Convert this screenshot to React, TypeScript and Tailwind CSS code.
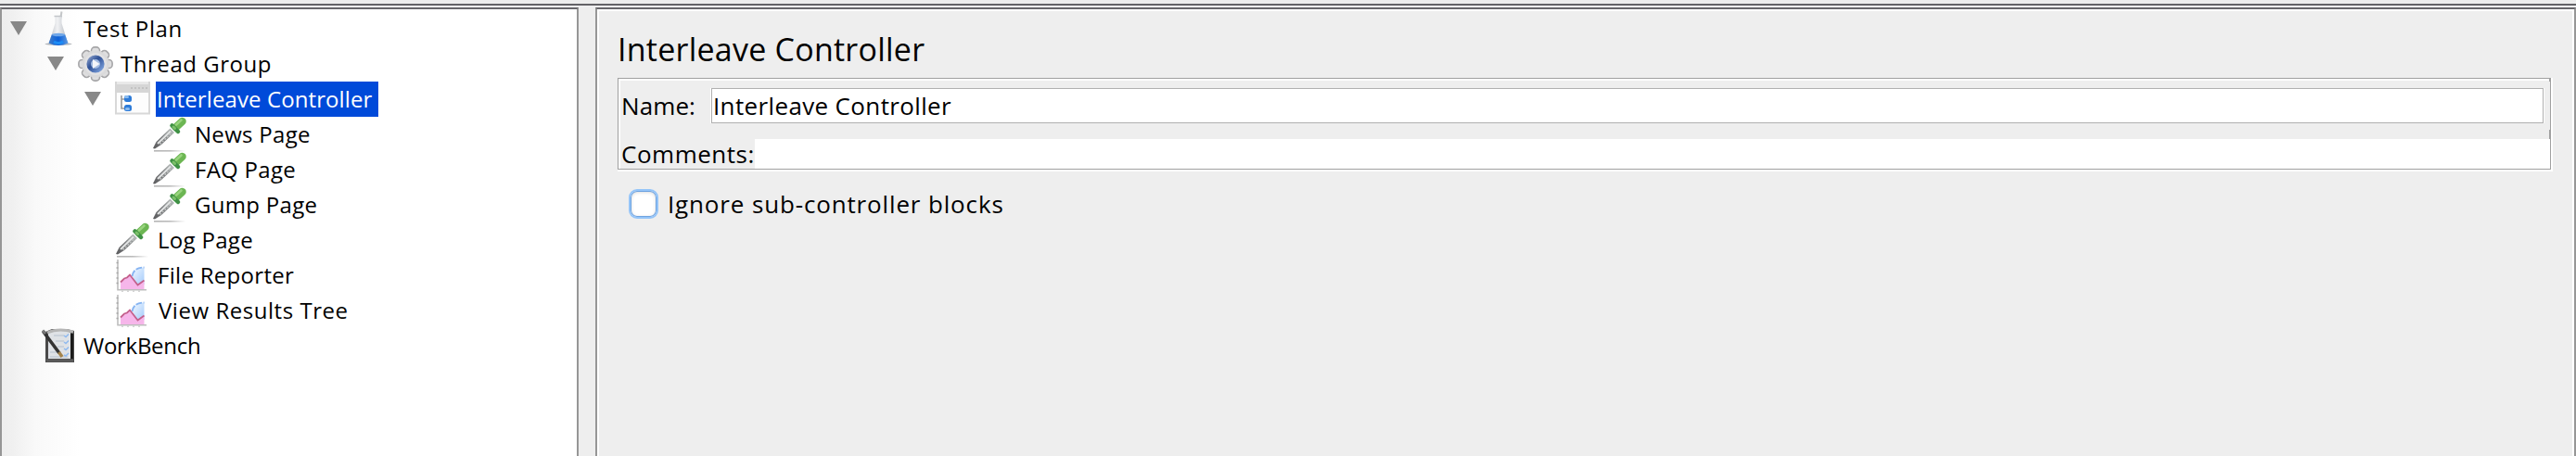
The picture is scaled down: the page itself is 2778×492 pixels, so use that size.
import React from "react";

function FlaskIcon() {
  return (
    <svg className="block h-[38px] w-[38px]" viewBox="0 0 38 38">
      <defs>
        <linearGradient id="flaskGlass" x1="0" x2="1">
          <stop offset="0" stopColor="#bfc3c9" />
          <stop offset="0.45" stopColor="#f1f2f4" />
          <stop offset="1" stopColor="#b3b8bf" />
        </linearGradient>
        <linearGradient id="flaskLiquid" x1="0" x2="1">
          <stop offset="0" stopColor="#3f7ccb" />
          <stop offset="0.5" stopColor="#0a5fd8" />
          <stop offset="1" stopColor="#5f9ae0" />
        </linearGradient>
      </defs>
      <ellipse cx="19" cy="35.5" rx="14.5" ry="1.4" fill="#9a9fa6" opacity="0.75" />
      <path d="M22.5 0.5 L20 15" stroke="#c4c6c8" strokeWidth="2" />
      <path d="M15.500 5 H22.500 V13 L29 34 Q19 39 9 34 L15.500 13 Z" fill="url(#flaskGlass)" />
      <path d="M14.500 5.500 H23" stroke="#c2c5c9" strokeWidth="1.500" />
      <path d="M12 25 H26 L29.500 34.500 Q19 39.500 8.500 34.500 Z" fill="url(#flaskLiquid)" />
      <ellipse cx="19" cy="25.500" rx="7" ry="1.800" fill="#6fa6e8" />
      <path d="M14 33 Q19 36 24 33" stroke="#1c8cf5" strokeWidth="3" fill="none" />
    </svg>
  );
}

function GearIcon() {
  return (
    <svg className="block h-[38px] w-[38px]" viewBox="0 0 38 38">
      <defs>
        <linearGradient id="gearBlue" x1="0" y1="0" x2="1" y2="1">
          <stop offset="0" stopColor="#8299c6" />
          <stop offset="0.4" stopColor="#2f5196" />
          <stop offset="1" stopColor="#7ba0dc" />
        </linearGradient>
      </defs>
      <g fill="#dededf" stroke="#a6a6a8" strokeWidth="1.6">
        {[0, 45, 90, 135].map((a) => (
          <rect key={a} x="14.5" y="0.9" width="9" height="36.2" rx="3.6" transform={`rotate(${a} 19 19)`} />
        ))}
      </g>
      <circle cx="19" cy="19" r="14.5" fill="#dadadb" />
      <circle cx="19" cy="19" r="12" fill="#e2e2e4" />
      <circle cx="19" cy="19" r="7.3" fill="#a4bce2" stroke="url(#gearBlue)" strokeWidth="4.6" />
      <path d="M16 14 L23.500 19 L16 24 Z" fill="#f4f6fa" />
    </svg>
  );
}

function ControllerIcon() {
  return (
    <svg className="block h-[38px] w-[38px]" viewBox="0 0 38 38">
      <rect x="1" y="1" width="36" height="33.5" fill="#fdfdfd" stroke="#d8d8d8" strokeWidth="2" />
      <rect x="0" y="0" width="38" height="12" fill="#d6d6d6" />
      <rect x="2" y="0" width="34" height="3" fill="#e9e9e9" />
      <path d="M17 7 h2 M21 7 h2 M25 7 h2 M29 7 h2 M33 7 h2" stroke="#c2c2c2" strokeWidth="2" />
      <path d="M7 15 V29 H11 M7 19 H11" stroke="#9a9a9a" strokeWidth="1.6" fill="none" />
      <rect x="10" y="15" width="8" height="7" rx="2.5" fill="#2d7bd8" />
      <rect x="10" y="25" width="8" height="7" rx="2.5" fill="#2d7bd8" />
      <rect x="10" y="15" width="5" height="3" rx="1.5" fill="#8bbcf0" />
      <rect x="11" y="28" width="5" height="3" rx="1.5" fill="#8bbcf0" />
    </svg>
  );
}

function DropperIcon() {
  return (
    <svg className="block h-[38px] w-[38px]" viewBox="0 0 38 38">
      <defs>
        <linearGradient id="dropperShade">
          <stop offset="0" stopColor="#b4b4b4" />
          <stop offset="0.5" stopColor="#bcbcbc" />
          <stop offset="1" stopColor="#fff" />
        </linearGradient>
        <linearGradient id="dropperTube" x1="0" y1="1" x2="1" y2="0">
          <stop offset="0" stopColor="#5a5a5c" />
          <stop offset="0.5" stopColor="#7c7e80" />
          <stop offset="1" stopColor="#c4cac8" />
        </linearGradient>
      </defs>
      <rect x="2" y="36" width="34" height="1.6" fill="url(#dropperShade)" />
      <path d="M1 34 L4.500 27 L19.500 12.500 L24 17 L10 30 L3 34.500 Z" fill="url(#dropperTube)" />
      <path d="M6 29 L20 15.500" stroke="#e2e4e4" strokeWidth="2" />
      <path d="M8.500 29.500 L21.500 17" stroke="#c2c5c4" strokeWidth="1.500" strokeDasharray="2 1.500" />
      <path d="M26 11 L32.500 5" stroke="#6cb653" strokeWidth="8.500" strokeLinecap="round" />
      <path d="M21.500 9.500 L28 16" stroke="#3f9145" strokeWidth="4.500" strokeLinecap="round" />
      <path d="M23 11 L24.500 12.500" stroke="#7cc069" strokeWidth="3" strokeLinecap="round" />
      <path d="M26 8.500 L31.500 3.500" stroke="#98d47e" strokeWidth="2.600" strokeLinecap="round" />
    </svg>
  );
}

function ReportIcon() {
  return (
    <svg className="block h-[38px] w-[38px]" viewBox="0 0 38 38">
      <defs>
        <linearGradient id="reportBlue" x1="0" y1="0" x2="1" y2="1">
          <stop offset="0" stopColor="#f2f8ff" />
          <stop offset="1" stopColor="#a3cbfb" />
        </linearGradient>
      </defs>
      <path d="M19 20 Q20 10.5 31.5 10.5 V29 H22 Z" fill="url(#reportBlue)" />
      <path d="M18.5 20 Q20 10.5 31.5 10.5" stroke="#86b4f2" strokeWidth="1.8" fill="none" strokeDasharray="7 1.5" />
      <path d="M6 26.5 L16 19 L24 29.5 L31.5 25 V34 H6 Z" fill="#f6b6ea" />
      <path d="M6 26.5 L10 22.5 L13 21.5 L16 18.5 L24.5 29.5 L31.5 24.5" stroke="#c4608c" strokeWidth="1.8" fill="none" />
      <path d="M3 2 V34.7 H34" stroke="#bdbdbd" strokeWidth="1.6" fill="none" />
      <path d="M1.5 5.5 h2 M1.5 11 h2 M1.5 16.500 h2 M1.500 22 h2 M1.500 27.500 h2" stroke="#a8a8a8" strokeWidth="1.5" />
      <path d="M8 35.500 v1.500 M14 35.500 v1.500 M20 35.500 v1.500 M26 35.500 v1.500" stroke="#c8c8c8" strokeWidth="1.5" />
    </svg>
  );
}

function WorkBenchIcon() {
  return (
    <svg className="block h-[38px] w-[38px]" viewBox="0 0 38 38">
      <path d="M5 4 L12 1 H28 L36 3 V37 H5 Z" fill="#4a4a4a" />
      <path d="M8 4 L13 2 H27 L32 5 V33 H8 Z" fill="#dfe2e6" />
      <path d="M7 5 Q19 -0.500 35 4" stroke="#b5b5b5" strokeWidth="3" fill="none" />
      <path d="M33.500 6 V35" stroke="#1c1c1c" strokeWidth="3" />
      <path d="M6 35 H35" stroke="#5a5a5a" strokeWidth="3.500" />
      <path d="M14 8 H25 M16 14 H25 M18 20 H25 M10 26 H17 M10 31 H29" stroke="#c3cbd6" strokeWidth="1.500" />
      <path d="M25 8 l2 1.500 l3 -3 M25 15 l2 1.500 l3 -3 M25 22 l2 1.500 l3 -3 M25 29 l2 1 l3 -3" stroke="#8fbaf0" strokeWidth="1.500" fill="none" />
      <path d="M2.500 3.500 L20 27" stroke="#333" strokeWidth="3.600" />
      <path d="M2 2.500 L5 6" stroke="#777" strokeWidth="3" />
      <path d="M19.500 26 L23 31" stroke="#a3834c" strokeWidth="3.500" />
    </svg>
  );
}

type Row = {
  label: string;
  icon: () => React.JSX.Element;
  indent: string;
  text: string;
  open?: boolean;
};

const rows: Row[] = [
  { label: "Test Plan", icon: FlaskIcon, indent: "pl-0", text: "w-[110px] pl-0.5 tracking-[0.59px]", open: true },
  { label: "Thread Group", icon: GearIcon, indent: "pl-10", text: "w-[168px] pl-0.5 tracking-[0.54px]", open: true },
  { label: "Interleave Controller", icon: ControllerIcon, indent: "pl-20", text: "w-[240px] pl-px bg-[#004ad9] text-white tracking-[0.1px]", open: true },
  { label: "News Page", icon: DropperIcon, indent: "pl-[120px]", text: "w-[132px] pl-0.5 tracking-[0.3px]" },
  { label: "FAQ Page", icon: DropperIcon, indent: "pl-[120px]", text: "w-[116px] pl-0.5 tracking-[0.28px]" },
  { label: "Gump Page", icon: DropperIcon, indent: "pl-[120px]", text: "w-[140px] pl-0.5 tracking-[0.3px]" },
  { label: "Log Page", icon: DropperIcon, indent: "pl-20", text: "w-[110px] pl-0.5 tracking-[0.3px]" },
  { label: "File Reporter", icon: ReportIcon, indent: "pl-20", text: "w-[154px] pl-0.5 tracking-[0.3px]" },
  { label: "View Results Tree", icon: ReportIcon, indent: "pl-20", text: "w-[214px] pl-[3px] tracking-[0.54px]" },
  { label: "WorkBench", icon: WorkBenchIcon, indent: "pl-0", text: "w-[136px] pl-0.5 tracking-[-0.28px]" },
];

function TreeRow({ label, icon: Icon, indent, text, open }: Row) {
  return (
    <div className={`flex h-[38px] ${indent}`}>
      <div className="w-[42px] shrink-0 pt-[11px] pl-[9px]">
        {open && (
          <svg className="block h-[15px] w-[18px]" viewBox="0 0 18 15">
            <path d="M0 0 H18 L9 15 Z" fill="#888888" />
          </svg>
        )}
      </div>
      <div className="w-11 shrink-0">
        <Icon />
      </div>
      <div className={`h-[38px] shrink-0 whitespace-nowrap text-2xl/[38px] ${text}`}>{label}</div>
    </div>
  );
}

export default function App() {
  return (
    <div className="flex h-[492px] w-[2778px] flex-col overflow-hidden bg-[#eeeeee] font-['Open_Sans','Noto_Sans',sans-serif] text-black">
      <div className="h-2 shrink-0 border-b-2 border-[#efeff0] bg-[linear-gradient(to_bottom,#ededed_4px,#636266_4px)] bg-clip-padding" />
      <div className="flex min-h-0 flex-1">
        <div className="w-[624px] shrink-0 border-x-2 border-t-2 border-x-[#969696] border-t-[#68676b] bg-[linear-gradient(to_right,#eeeeee,#f0f0f0_12px,#f9f9f9_36px,#ffffff_84px)] pt-0.5">
          {rows.map((row) => (
            <TreeRow key={row.label} {...row} />
          ))}
        </div>
        <div className="w-[18px] shrink-0" />
        <div className="flex-1 border-x-2 border-t-2 border-x-[#969696] border-t-[#68676b]">
          <div className="h-full border-x-2 border-t-2 border-white pl-5">
            <h1 className="h-[72px] whitespace-nowrap pt-[17px] text-[34px]/[48px] tracking-[0.24px]">Interleave Controller</h1>
            <div className="flex h-[101px] w-[2087px] border-r-2 border-b-2 border-white">
              <div className="relative w-full border border-[#a0a0a0]">
                <div className="flex h-full flex-col border-t-2 border-l-2 border-white">
                  <div className="flex h-[63px] shrink-0 pt-2">
                    <label htmlFor="name" className="w-[98px] shrink-0 pl-px text-[26px]/[38px] tracking-[0.1px]">Name:</label>
                    <div id="name" className="h-[38px] w-[1976px] border border-[#b0b0b0] bg-white pl-px text-[26px]/[37px] tracking-[0.36px] shadow-[-1px_0_0_#fff,1px_0_0_#fff]">
                      Interleave Controller
                    </div>
                  </div>
                  <div className="flex h-8 shrink-0">
                    <label htmlFor="comments" className="w-[145px] shrink-0 pl-px text-[26px]/[32px] tracking-[0.52px]">Comments:</label>
                    <div id="comments" className="flex-1 bg-white" />
                  </div>
                </div>
                <div className="absolute top-0 right-0 h-[3px] w-px bg-[#a0a0a0]" />
                <div className="absolute top-[55px] right-0 h-[10px] w-px bg-[#a0a0a0]" />
              </div>
            </div>
            <label className="mt-[15px] ml-3 flex h-10 items-center">
              <span className="h-8 w-8 shrink-0 rounded-[9px] border-[2px] border-[#94c4f8] bg-white shadow-[inset_0_0_0_1px_#6fa3e0,inset_0_1px_4px_#cccccc]" />
              <span className="ml-[10px] whitespace-nowrap text-[26px]/[40px] tracking-[0.85px]">Ignore sub-controller blocks</span>
            </label>
          </div>
        </div>
      </div>
    </div>
  );
}
